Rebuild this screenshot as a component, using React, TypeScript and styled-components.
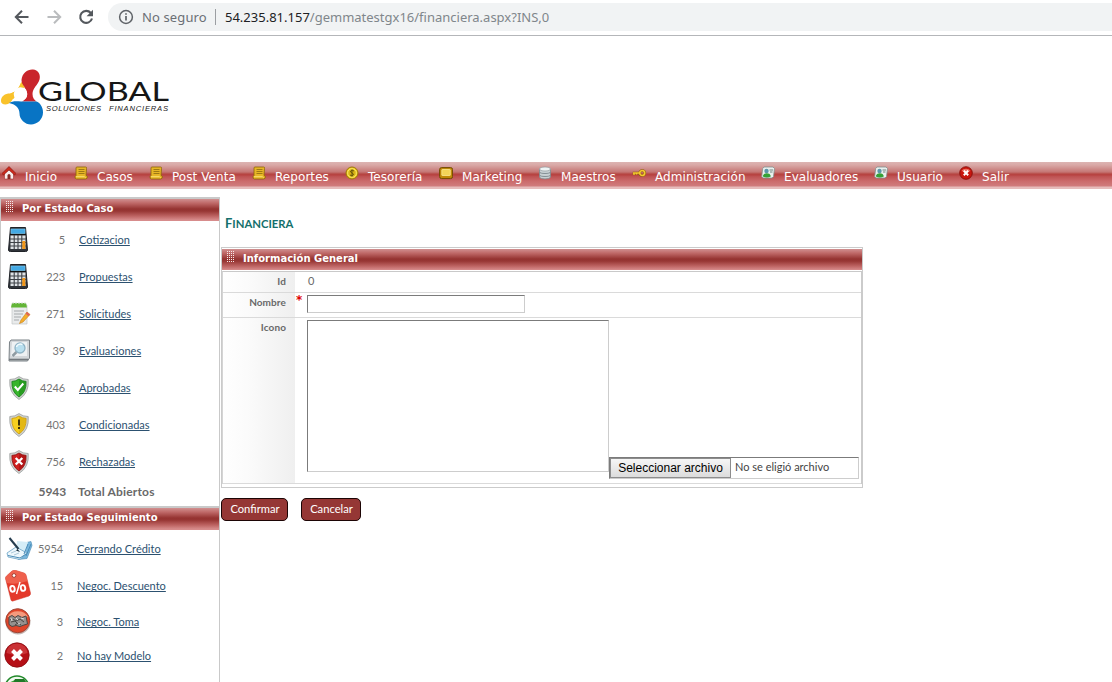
import React from 'react';
import styled, { createGlobalStyle } from 'styled-components';

const GlobalStyle = createGlobalStyle`
  *, *::before, *::after { box-sizing: border-box; }
  html, body { margin: 0; height: 682px; overflow: hidden; background: #fff; }
  body { font-family: Lato, "Liberation Sans", sans-serif; font-size: 11px; color: #696969; }
  svg { display: block; flex: none; }
`;

const Page = styled.div`
  width: 1112px;
  height: 682px;
  overflow: hidden;
`;

/* Browser bar */
const BrowserBar = styled.header`
  height: 36px;
  display: flex;
  align-items: flex-start;
  border-bottom: 1px solid #b4b6b9;
  padding: 3px 0 0 11px;
`;
const NavButtons = styled.div`
  display: flex;
  align-items: center;
  gap: 10px;
  height: 28px;
  width: 97px;
`;
const Address = styled.div`
  flex: 1;
  height: 28px;
  display: flex;
  align-items: center;
  padding-left: 9px;
  background: #f1f3f4;
  border-radius: 14px 0 0 14px;
  font: 13px/28px "Noto Sans", sans-serif;
  color: #80868b;
  white-space: pre;
`;
const Security = styled.span`
  margin-left: 7px;
  width: 73px;
  letter-spacing: 0.13px;
  color: #6b6f74;
`;
const Divider = styled.span`
  width: 1px;
  height: 16px;
  margin-right: 9px;
  background: #9b9ea2;
`;
const Host = styled.span`
  color: #202124;
`;

/* Logo */
const LogoArea = styled.div`
  height: 126px;
  padding-top: 31px;
`;

/* Menu */
const Menu = styled.nav`
  height: 27px;
  display: flex;
  padding-left: 2px;
  background: linear-gradient(
    #dcb4b2 0, #d9a9a7 3px, #c57674 10px, #b64844 12px,
    #b8403f 13px, #bd5050 14px, #cb6a6b 19px, #d07c7d 24px, #e6bcbc 25px, #e6bcbc 27px
  );
`;
const MenuItem = styled.a<{ $width: number }>`
  display: flex;
  flex: none;
  width: ${(p) => p.$width}px;
  padding-top: 4px;
  font: 12px/23px "DejaVu Sans", Verdana, sans-serif;
  letter-spacing: 0.06px;
  color: #fff;
  white-space: nowrap;
`;
const MenuIcon = styled.svg`
  width: 14px;
  height: 14px;
  margin-right: 9px;
`;

const Body = styled.div`
  display: flex;
  align-items: flex-start;
  padding-top: 8px;
`;

/* Shared panel header */
const PanelHeader = styled.h2<{ $height?: number }>`
  margin: 0;
  height: ${(p) => p.$height ?? 22}px;
  display: flex;
  align-items: flex-start;
  padding: 2px 0 0 5px;
  font: bold 10px/16px "DejaVu Sans", Verdana, sans-serif;
  color: #fff;
  background: linear-gradient(#d09090 0, #c06a69 4px, #953331 10px, #973634 12px, #bd6362 17px, #d78c8c 21px);
`;
const Grip = styled.span`
  width: 8px;
  height: 11px;
  margin-right: 8px;
  background: repeating-linear-gradient(90deg, #f8e8e8 0 1px, transparent 1px 2px);
  mask: repeating-linear-gradient(#000 0 1px, transparent 1px 2px);
`;

/* Sidebar */
const Sidebar = styled.aside`
  width: 220px;
  flex: none;
  border: 1px solid #c9c9c9;
  border-top-width: 2px;
  border-bottom: 0;
`;
const SidePanel = styled.section`
  & + & { border-top: 2px solid #c9c9c9; }
`;
const StateRow = styled.div<{ $height: number; $number: number }>`
  display: grid;
  grid-template-columns: 32px ${(p) => p.$number}px 1fr;
  column-gap: 0;
  align-items: center;
  height: ${(p) => p.$height}px;
`;
const IconCell = styled.span<{ $left: number }>`
  padding-left: ${(p) => p.$left}px;
`;
const Count = styled.span`
  text-align: right;
  letter-spacing: -0.1px;
  color: #757575;
`;
const StateLink = styled.a`
  justify-self: start;
  margin-left: 14px;
  color: #2c5170;
  text-decoration: underline;
  text-underline-offset: 1px;
  text-decoration-skip-ink: none;
  white-space: nowrap;
`;
const TotalRow = styled.div`
  display: grid;
  grid-template-columns: 65px 1fr;
  column-gap: 12px;
  height: 26px;
  font: bold 12px/24px Lato, sans-serif;
  span:first-child { text-align: right; letter-spacing: -0.1px; }
  span:last-child { letter-spacing: 0.17px; }
`;

/* Main form */
const Main = styled.main`
  margin-left: 1px;
  width: 642px;
`;
const Title = styled.h1`
  margin: 0;
  height: 50px;
  padding: 17px 0 0 4px;
  font: bold 11.3px/18px Lato, sans-serif;
  color: #14706c;
  &::first-letter { font-size: 13px; }
`;
const Group = styled.section`
  height: 241px;
  border: 1px solid #cbcbcb;
  padding-top: 1px;
`;
const Fields = styled.div`
  margin: 1px 0 0 0;
  border-left: 1px solid #d5d5d5;
  border-right: 1px solid #cbcbcb;
  border-top: 1px solid #c9c9c9;
`;
const FieldRow = styled.div<{ $height: number }>`
  display: grid;
  grid-template-columns: 72px 12px 1fr;
  height: ${(p) => p.$height}px;
  border-bottom: 1px solid #dadada;
`;
const Label = styled.label`
  padding: 0 9px 0 0;
  text-align: right;
  font: bold 10px/18px Lato, sans-serif;
  letter-spacing: 0.1px;
  background: linear-gradient(90deg, #fff, #fafafa 40%, #efefef);
`;
const Required = styled.span`
  color: #e00000;
  font: bold 12px/15px "DejaVu Sans", sans-serif;
  padding-left: 1px;
`;
const Value = styled.span`
  padding-left: 1px;
  line-height: 18px;
`;
const sunken = `
  background: #fff;
  border: 1px solid #cdcdcd;
  border-top-color: #7b7b7b;
  border-left-color: #7b7b7b;
`;
const NameInput = styled.input`
  ${sunken}
  width: 218px;
  height: 18px;
  margin-top: 2px;
  padding: 0 2px;
  outline: 0;
`;
const Upload = styled.div`
  display: flex;
  align-items: flex-end;
  height: 163px;
  padding-top: 2px;
`;
const Preview = styled.div`
  ${sunken}
  width: 302px;
  height: 152px;
  align-self: flex-start;
`;
const FilePicker = styled.div`
  ${sunken}
  display: flex;
  align-items: center;
  width: 250px;
  height: 22px;
  margin-bottom: 2px;
  line-height: 18px;
  color: #444;
`;
const FileName = styled.span`
  height: 20px;
`;
const FileButton = styled.button`
  width: 121px;
  height: 20px;
  padding: 0;
  margin-right: 4px;
  border: 1px solid #8d8d8d;
  background: linear-gradient(#f6f6f6, #dcdcdc);
  font: 12px/16px "Liberation Sans", Arial, sans-serif;
  color: #000;
`;
const Actions = styled.div`
  display: flex;
  gap: 13px;
  padding-top: 10px;
`;
const ActionButton = styled.button<{ $width: number }>`
  width: ${(p) => p.$width}px;
  height: 23px;
  padding: 0 0 2px 1px;
  border: 1px solid #1c0505;
  border-radius: 5px;
  background: #953735;
  font: 11.2px/18px Lato, sans-serif;
  color: #fff;
`;

const LogoTagline = styled.text`
  font: italic 7.600px "Liberation Sans Narrow", "Liberation Sans", sans-serif;
  fill: #222;
`;

const Logo = () => (
  <svg width="172" height="60" viewBox="0 67 172 60">
    <path d="M10 94Q18 91 21.500 82l4 4-7 6-5 7z" fill="#f9c22b" />
    <path d="M21.500 80C22 73 28 69 33 69.500c5 .5 8 5 6.500 10C38 85 32.500 88 32.500 94c0 4 2 6 4 7.500H22c4-2 5.500-5 5-9C26.500 88 21.500 86 21.500 80z" fill="#c9252b" />
    <path d="M1 101c0-5 4-7.500 9-7.500 6-1.500 9-5 11-11l4 5c-7 0-11 5-11.500 10-1.500 4-4.500 7-8 7-3 0-4.500-1.500-4.500-3.500z" fill="#f9c22b" />
    <path d="M9 103c3-2 7-2 12-1.500h15.500c3 1 6.500 5 6.500 11 0 7-6 12-12 12s-11.500-5-11.500-11c0-5-3-9-10.500-10.500z" fill="#0874c4" />
    <circle cx="20.500" cy="94" r="6.800" fill="#fff" />
    <text x="38" y="101.200" fontFamily="Lato, sans-serif" fontSize="26.500" fill="#161616" textLength="131" lengthAdjust="spacingAndGlyphs">GLOBAL</text>
    <LogoTagline x="46" y="111" textLength="55">SOLUCIONES</LogoTagline>
    <LogoTagline x="109" y="111" textLength="59">FINANCIERAS</LogoTagline>
  </svg>
);

const menuArt: Record<string, React.ReactNode> = {
  home: (
    <>
      <path d="M2.500 7v6h9V7L7 3z" fill="#f7eeee" stroke="#a3302c" strokeWidth=".6" />
      <path d="M0 7.500 7 .5l7 7-1.500 1.500L7 4 1.500 9z" fill="#cf2a1c" stroke="#7c130d" strokeWidth=".6" />
      <path d="M5.500 13V9.500a1.500 1.500 0 0 1 3 0V13z" fill="#8a2723" />
    </>
  ),
  note: (
    <>
      <path d="M3 1h8.500q1.500 0 1 1.500L12 9.500l1.500 1q0 2.500-2 2.500H2.500Q.8 13 1 10.500L2 9.500V2q0-1 1-1z" fill="#e7b526" stroke="#8c6508" strokeWidth=".8" />
      <path d="M4.500 3.500h6M4.500 5.500h6M4.500 7.500h6" stroke="#8c6a10" strokeWidth=".8" />
      <path d="M2 10.700h8.500l1 1" fill="none" stroke="#fbe57b" strokeWidth=".9" />
    </>
  ),
  coin: (
    <>
      <circle cx="7" cy="7" r="6" fill="#efc81f" stroke="#9a770b" />
      <circle cx="7" cy="7" r="4.300" fill="#d8b313" stroke="#fff07d" strokeWidth=".8" />
      <path d="M9 5Q7 3.600 5.700 5q-.5 1.300 1.300 2 2 .8 1.200 2Q7 10.300 5 9M7 3.500v7" fill="none" stroke="#66530a" />
    </>
  ),
  board: (
    <>
      <rect x=".6" y="1.600" width="13" height="11" rx="2" fill="#c08a08" stroke="#714b02" />
      <rect x="2.800" y="3.500" width="8.500" height="6" rx=".5" fill="#f3d458" stroke="#fff0a0" strokeWidth=".7" />
    </>
  ),
  data: (
    <>
      <path d="M1.500 3v8c0 2.500 11 2.500 11 0V3z" fill="#c7d0d3" stroke="#7e898e" strokeWidth=".8" />
      <ellipse cx="7" cy="3" rx="5.500" ry="2" fill="#eef4f5" stroke="#929ca0" strokeWidth=".7" />
      <path d="M1.500 6c0 2 11 2 11 0M1.500 9c0 2 11 2 11 0" fill="none" stroke="#7e898e" strokeWidth=".9" />
    </>
  ),
  key: (
    <>
      <circle cx="10.200" cy="7" r="2.500" fill="none" stroke="#8a5f07" strokeWidth="2.600" />
      <path d="M8 7H.8M2 7v2M4.500 7v1.500" stroke="#8a5f07" strokeWidth="2.400" />
      <circle cx="10.200" cy="7" r="2.500" fill="none" stroke="#f4c832" strokeWidth="1.700" />
      <path d="M8 7H1M2 7v2M4.500 7v1.500" stroke="#f4c832" strokeWidth="1.400" />
    </>
  ),
  card: (
    <>
      <path d="M3 1h9l1.500 1.500-1 8L11 12H2L.7 10.500l1-8z" fill="#eaf0ef" stroke="#82908d" strokeWidth=".8" />
      <circle cx="5.500" cy="5" r="2.200" fill="#5a97a9" />
      <path d="M1.800 10.500c0-4.500 8-4.500 8 0q-4 2-8 0z" fill="#35a136" />
      <path d="M8.500 4H12M9 6h2.500" stroke="#6c8780" />
    </>
  ),
  exit: (
    <>
      <circle cx="7" cy="7" r="6.300" fill="#c8170f" stroke="#7f0b06" strokeWidth=".8" />
      <path d="M2.500 5a5 4 0 0 1 9 0q-4 2-9 0z" fill="#ec7467" />
      <path d="m4.800 4.800 4.400 4.400m0-4.400L4.800 9.200" stroke="#fff" strokeWidth="2" />
    </>
  ),
};

const menu: [string, string, number][] = [
  ['Inicio', 'home', 72],
  ['Casos', 'note', 75],
  ['Post Venta', 'note', 103],
  ['Reportes', 'note', 93],
  ['Tesorería', 'coin', 94],
  ['Marketing', 'board', 99],
  ['Maestros', 'data', 94],
  ['Administración', 'key', 129],
  ['Evaluadores', 'card', 113],
  ['Usuario', 'card', 85],
  ['Salir', 'exit', 60],
];

const Calculator = () => (
  <svg width="20" height="25" viewBox="0 0 20 25">
    <path d="M2.500.5h15L19.500 23q0 1.500-2 1.500h-15q-2 0-2-1.500z" fill="#30343a" stroke="#202328" />
    <rect x="3" y="2" width="14" height="4.500" fill="#43a9e4" stroke="#7fcdf4" strokeWidth=".6" />
    <rect x="2.500" y="8.500" width="15" height="13.500" fill="#dfe3e6" />
    <path d="M2 12h16M2 15.500h16M2 19h16M6.200 8v14M10 8v14M13.800 8v14" stroke="#3e4247" strokeWidth="1.100" />
    <path d="M14.300 14h3v8h-3z" fill="#f29718" />
    <path d="M2 7.500h16" stroke="#111" />
  </svg>
);
const Notes = () => (
  <svg width="22" height="24" viewBox="0 0 22 24">
    <path d="M3 3h15v19H3z" fill="#e9ebec" stroke="#c3c6c7" strokeWidth=".7" />
    <path d="M3 1h14l1 4.500H2z" fill="#63b537" />
    <path d="M4 0v2M7 0v2M10 0v2M13 0v2M16 0v2" stroke="#d9dedc" />
    <path d="M5 9h10M5 12h9M5 15h7M5 18h5" stroke="#a5a9ab" />
    <path d="m18 10 3 2.500-7 7.500-3.500 1.500L12 18z" fill="#f4ae2a" stroke="#c98019" strokeWidth=".6" />
    <path d="m18 10 3 2.500-1.500 1.700-3-2.700z" fill="#df6559" />
  </svg>
);
const Search = () => (
  <svg width="23" height="23" viewBox="0 0 23 23">
    <path d="M3 1h18.500v18l-2 3H1L1.500 3z" fill="#d3d7da" stroke="#7b8287" />
    <path d="M4 3h15v14H3z" fill="#eef1f3" />
    <path d="M1 20.500h19" stroke="#73797e" strokeWidth="1.600" />
    <path d="m8.500 13-4 4" stroke="#8f9ba2" strokeWidth="2.500" />
    <circle cx="12" cy="9" r="5" fill="#b8dfef" stroke="#8fb3c5" strokeWidth="1.300" />
    <path d="M8.500 8a4 3.500 0 0 1 6-2.500" stroke="#f3fcff" strokeWidth="1.500" fill="none" />
  </svg>
);
const Shield = ({ color, dark, children }: { color: string; dark: string; children: React.ReactNode }) => (
  <svg width="20" height="24" viewBox="0 0 20 24">
    <path d="M10 .6q4 3 9.200 2.900Q20.500 17 10 23.500-.5 17 .8 3.500 6 3.600 10 .6z" fill="#d0d3d1" stroke="#9ca09e" strokeWidth=".8" />
    <path d="M10 3q3.400 2.400 7.100 2.400Q17.700 16 10 21 2.300 16 2.900 5.400 6.600 5.400 10 3z" fill={color} stroke={dark} strokeWidth=".8" />
    <path d="M10 3.500q3.400 2.300 6.700 2.300Q17 15 10 20.300z" fill={dark} opacity=".4" />
    {children}
  </svg>
);
const Signing = () => (
  <svg width="27" height="24" viewBox="0 0 27 24">
    <path d="m14 7 11-2.500 1 4-5 13-9 1z" fill="#78b6dc" stroke="#4989b2" strokeWidth=".6" />
    <path d="m11 4 11 1-3 13-9 1z" fill="#d5edf7" />
    <path d="m1 16 9-6 11 6-7 6.500-12-2.500z" fill="#edf7fc" stroke="#6aa2c5" strokeWidth=".8" />
    <path d="m2 18.500 12 2.500 6-4M20 19l5-12M18 17l4-10" fill="none" stroke="#4a8cb7" />
    <path d="m3.500 1 9 11" stroke="#253c4e" strokeWidth="2" />
    <path d="m11.500 12 2.500 3-4-1.500z" fill="#142b3b" />
    <path d="m5 16 5-2M8 18l5-2" stroke="#9cbccf" strokeWidth=".8" />
  </svg>
);
const Discount = () => (
  <svg width="26" height="32" viewBox="0 0 26 32">
    <path d="M1.500 6 7 1q2-1.200 4-.5l8 2.500q1.500.5 2 2L25.500 23q.3 2-1.500 3L8 31q-1.500.5-2-1L.6 9q-.4-2 .9-3z" fill="#e43a2b" stroke="#cf3426" strokeWidth=".5" />
    <path d="M1.500 6 7 1q2-1.200 4-.5l8 2.500q1.500.5 2 2l1.500 6Q12 15 2 13L.6 9q-.4-2 .9-3z" fill="#f4705c" opacity=".7" />
    <circle cx="9" cy="5.500" r="1.900" fill="#fff" stroke="#a53d31" />
    <g fill="none" stroke="#fff" strokeWidth="1.900">
      <ellipse cx="7.500" cy="18.800" rx="2.200" ry="2.900" transform="rotate(-12 7.500 18.800)" />
      <ellipse cx="18" cy="18" rx="2.200" ry="2.900" transform="rotate(-12 18 18)" />
      <path d="m15 12-3.500 12" strokeWidth="1.400" />
    </g>
  </svg>
);
const Handshake = () => (
  <svg width="26" height="27" viewBox="0 0 26 27">
    <circle cx="13" cy="14" r="12.500" fill="#7b5b55" opacity=".45" />
    <circle cx="12.700" cy="12.700" r="12" fill="#e0452a" stroke="#a04535" />
    <path d="M2.500 9a11 9 0 0 1 20.500 0q-10 4-20.500 0z" fill="#f49a7d" />
    <path d="m4 9 3-1.500 3 2 3-2 4 2 4-1.500 1.500 8-3.500 1-4 1.500-4-1-4 1-3-2z" fill="#96918e" stroke="#4d4745" />
    <path d="m8 11 3 2 4-2 4 3M6 14l4-1 3 3M10 17l3-2 3 2M5 12l2-1" fill="none" stroke="#4b4644" />
    <path d="m11 10 2 2M16 10l3 1M6 10l1 3M13 15l2 1" stroke="#ddd" />
  </svg>
);
const NoModel = () => (
  <svg width="26" height="26" viewBox="0 0 26 26">
    <circle cx="13" cy="13" r="12.200" fill="#b50f16" stroke="#860d11" strokeWidth=".8" />
    <path d="M2.500 11a10.500 9.500 0 0 1 21 0q-10 4-21 0z" fill="#d94a4d" opacity=".6" />
    <path d="m8.500 8.500 9 9m0-9-9 9" stroke="#fff" strokeWidth="4" />
  </svg>
);
const GreenBadge = () => (
  <svg width="26" height="26" viewBox="0 0 26 26">
    <circle cx="13" cy="13" r="12" fill="#f2faf1" stroke="#238a2c" strokeWidth="1.600" />
    <path d="M5 8q5-4 13-3l4 3v5H9z" fill="#39a534" />
    <path d="M11 4h9l3 4H9z" fill="#1f7a27" />
  </svg>
);

const caseStates: [string, string, React.ReactNode, number][] = [
  ['5', 'Cotizacion', <Calculator />, 7],
  ['223', 'Propuestas', <Calculator />, 7],
  ['271', 'Solicitudes', <Notes />, 8],
  ['39', 'Evaluaciones', <Search />, 7],
  ['4246', 'Aprobadas', <Shield color="#37b52b" dark="#127914"><path d="m5.800 10.500 3 3.500 5.500-6.500" fill="none" stroke="#fff" strokeWidth="2" /></Shield>, 8],
  ['403', 'Condicionadas', <Shield color="#f6cf20" dark="#c99506"><path d="M10 6.500v6M10 14v2" stroke="#342b08" strokeWidth="1.900" /></Shield>, 8],
  ['756', 'Rechazadas', <Shield color="#cf2020" dark="#870b0b"><path d="m6.700 8 6.600 6.500m0-6.500-6.600 6.500" stroke="#fff" strokeWidth="2.300" /></Shield>, 8],
];
const followStates: [string, string, React.ReactNode, number, number][] = [
  ['5954', 'Cerrando Crédito', <Signing />, 5, 37],
  ['15', 'Negoc. Descuento', <Discount />, 4, 37],
  ['3', 'Negoc. Toma', <Handshake />, 4, 34],
  ['2', 'No hay Modelo', <NoModel />, 3, 34],
  ['', '', <GreenBadge />, 3, 31],
];

export default function App() {
  return (
    <Page>
      <GlobalStyle />
      <BrowserBar>
        <NavButtons>
          <svg width="22" height="22" viewBox="0 0 22 22" fill="none" stroke="#54585d" strokeWidth="2"><path d="M17.500 11H5M11 4.800 4.800 11l6.200 6.200" /></svg>
          <svg width="22" height="22" viewBox="0 0 22 22" fill="none" stroke="#babcbe" strokeWidth="2"><path d="M4.500 11H17M11 4.800l6.200 6.200-6.200 6.200" /></svg>
          <svg width="22" height="22" viewBox="0 0 22 22"><path d="M15.800 7A6 6 0 1 0 17 12.500" fill="none" stroke="#54585d" strokeWidth="2.100" /><path d="M18 3.800v6.400h-6.400z" fill="#54585d" /></svg>
        </NavButtons>
        <Address>
          <svg width="18" height="18" viewBox="0 0 18 18" fill="none" stroke="#5f6368" strokeWidth="1.500"><circle cx="9" cy="9" r="6.400" /><path d="M9 8v4.400M9 5.200v1.600" strokeWidth="1.700" /></svg>
          <Security>No seguro</Security>
          <Divider />
          <Host>54.235.81.157</Host>
          <span>/gemmatestgx16/financiera.aspx?INS,0</span>
        </Address>
      </BrowserBar>
      <LogoArea><Logo /></LogoArea>
      <Menu>
        {menu.map(([label, art, width]) => (
          <MenuItem key={label} $width={width}>
            <MenuIcon viewBox="0 0 14 14">{menuArt[art]}</MenuIcon>
            {label}
          </MenuItem>
        ))}
      </Menu>
      <Body>
        <Sidebar>
          <SidePanel>
            <PanelHeader><Grip />Por Estado Caso</PanelHeader>
            {caseStates.map(([count, label, icon, left]) => (
              <StateRow key={label} $height={37} $number={32}>
                <IconCell $left={left}>{icon}</IconCell>
                <Count>{count}</Count>
                <StateLink>{label}</StateLink>
              </StateRow>
            ))}
            <TotalRow><span>5943</span><span>Total Abiertos</span></TotalRow>
          </SidePanel>
          <SidePanel>
            <PanelHeader><Grip />Por Estado Seguimiento</PanelHeader>
            {followStates.map(([count, label, icon, left, height], i) => (
              <StateRow key={i} $height={height} $number={30}>
                <IconCell $left={left}>{icon}</IconCell>
                <Count>{count}</Count>
                <StateLink>{label}</StateLink>
              </StateRow>
            ))}
          </SidePanel>
        </Sidebar>
        <Main>
          <Title>FINANCIERA</Title>
          <Group>
            <PanelHeader $height={21}><Grip />Información General</PanelHeader>
            <Fields>
              <FieldRow $height={21}><Label>Id</Label><span /><Value>0</Value></FieldRow>
              <FieldRow $height={25}><Label>Nombre</Label><Required>*</Required><NameInput /></FieldRow>
              <FieldRow $height={166}>
                <Label>Icono</Label>
                <span />
                <Upload>
                  <Preview />
                  <FilePicker><FileButton>Seleccionar archivo</FileButton><FileName>No se eligió archivo</FileName></FilePicker>
                </Upload>
              </FieldRow>
            </Fields>
          </Group>
          <Actions>
            <ActionButton $width={67}>Confirmar</ActionButton>
            <ActionButton $width={60}>Cancelar</ActionButton>
          </Actions>
        </Main>
      </Body>
    </Page>
  );
}
